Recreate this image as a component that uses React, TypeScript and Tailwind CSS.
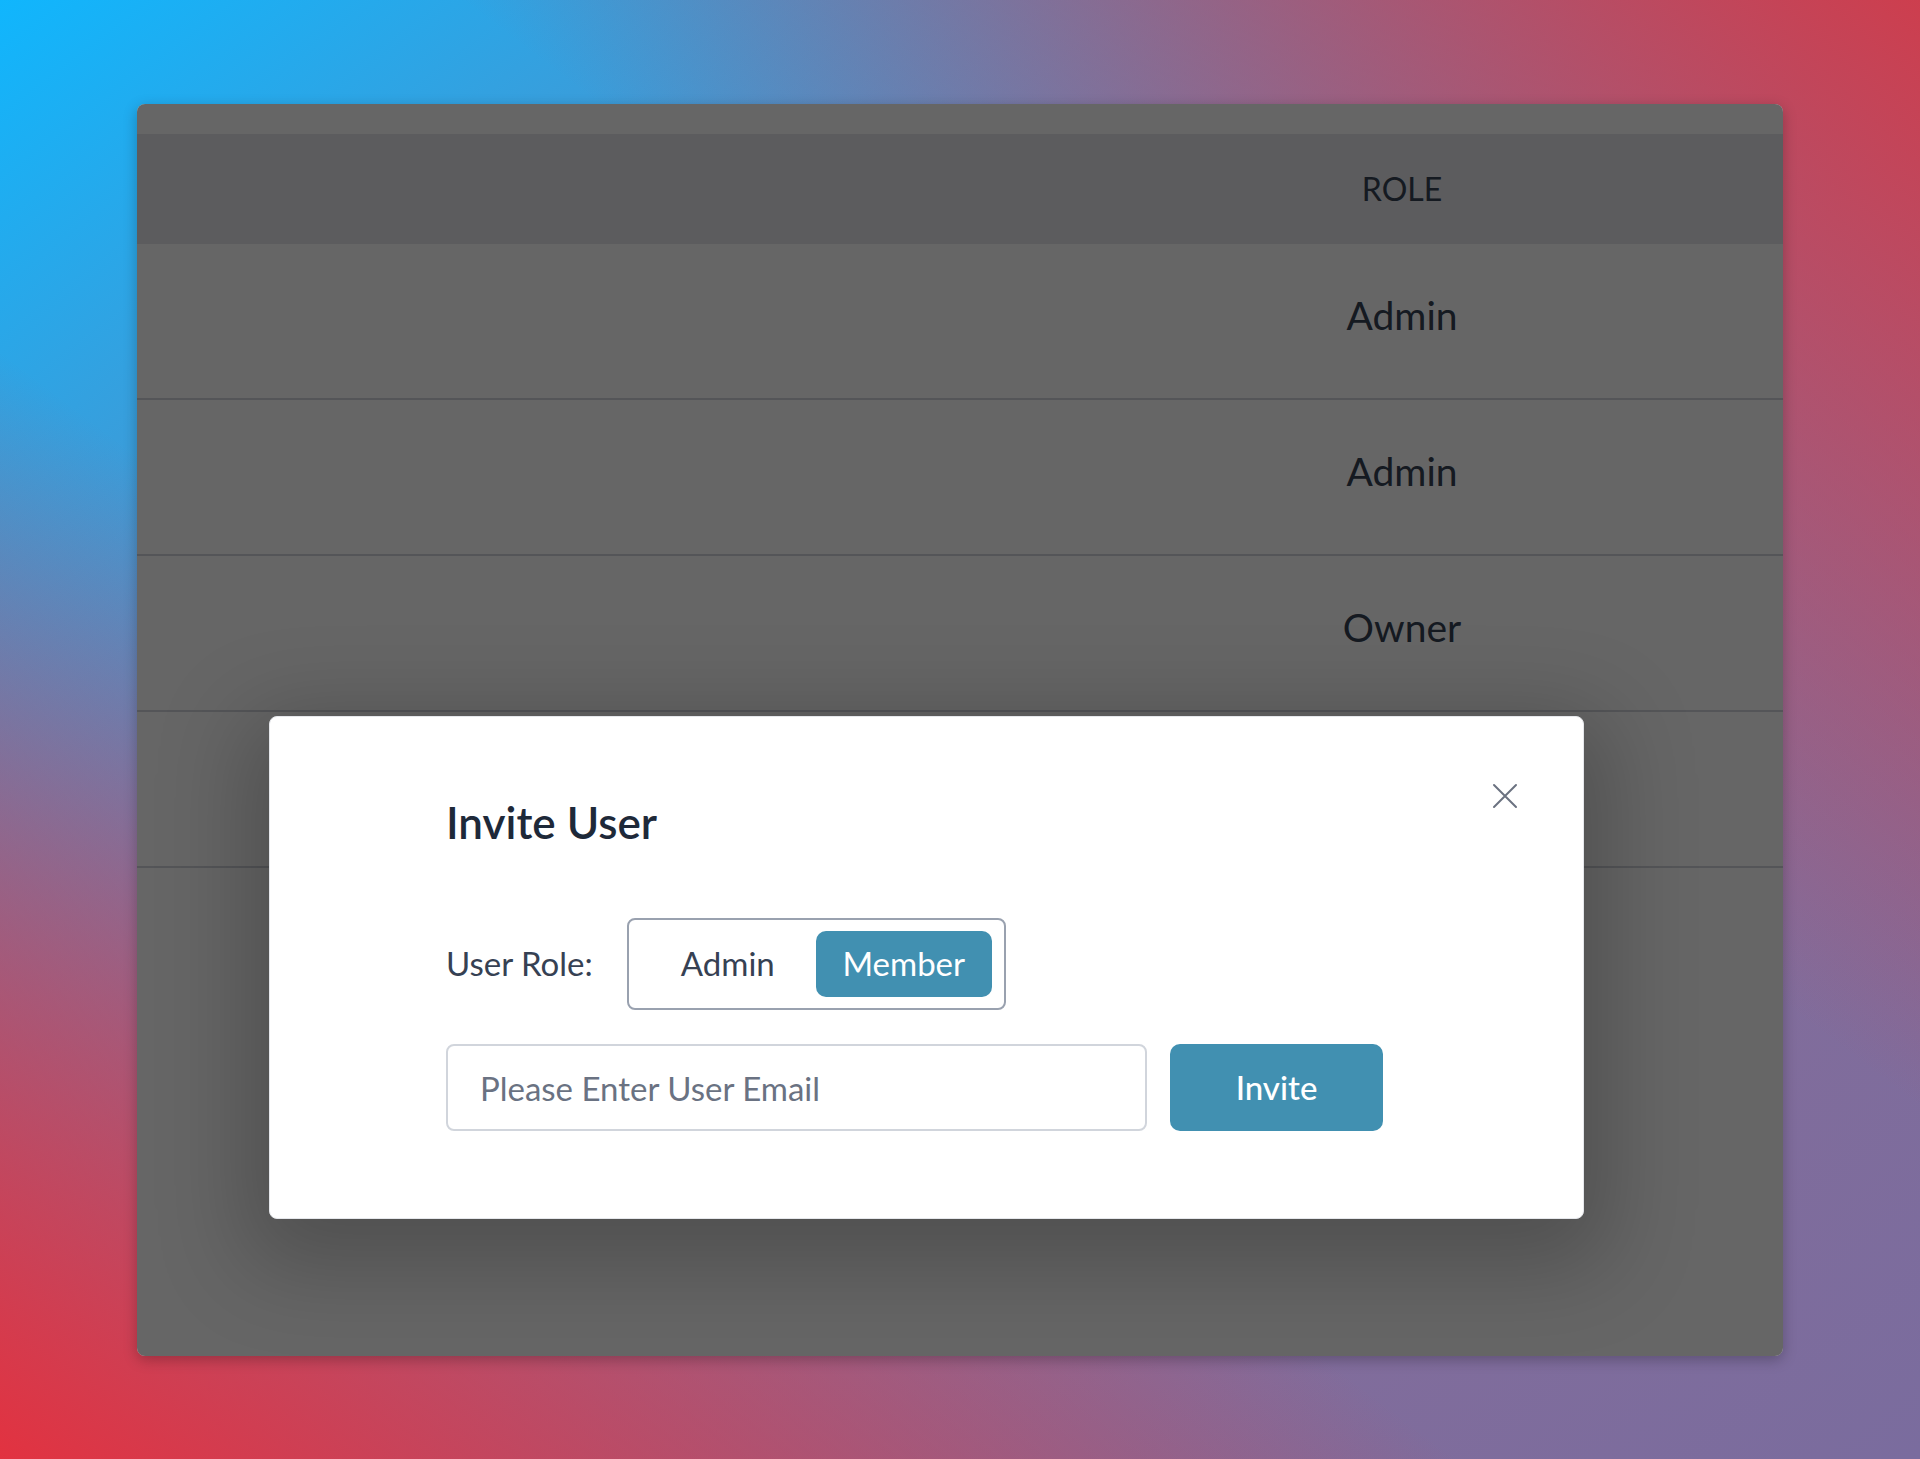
import React from "react";

const roles = ["Admin", "Admin", "Owner", "Member"];

const CloseIcon: React.FC = () => (
    <svg width="26" height="26" viewBox="0 0 26 26" fill="none" stroke="#6b7280" strokeWidth="2" strokeLinecap="round">
        <path d="M2 2 L24 24 M24 2 L2 24" />
    </svg>
);

const InviteModal: React.FC = () => (
    <div className="relative w-[1315px] h-[503px] bg-white rounded-lg border border-gray-200 shadow-[0_24px_90px_24px_rgba(0,0,0,0.22)] pl-[176px] pt-[83px]">
        <button className="absolute top-[66px] right-[65px]">
            <CloseIcon />
        </button>

        <h2 className="text-[44px] leading-none font-semibold text-gray-800">Invite User</h2>

        {/* role toggle */}
        <div className="flex items-center gap-[34px] mt-[74px]">
            <span className="text-[33px] text-gray-700">User Role:</span>
            <div className="flex border-2 border-gray-400 rounded-lg pl-[11px] pr-[12px] py-[11px]">
                <button className="w-[176px] h-[66px] rounded-[10px] text-[33px] text-gray-700">Admin</button>
                <button className="w-[176px] h-[66px] rounded-[10px] text-[33px] text-white bg-[#4190b1]">Member</button>
            </div>
        </div>

        {/* email + submit */}
        <div className="flex items-center gap-[23px] mt-[34px]">
            <input
                type="text"
                placeholder="Please Enter User Email"
                className="w-[701px] h-[87px] border-2 border-gray-300 rounded-lg px-[32px] text-[33px] text-gray-700 placeholder:text-gray-500 outline-none font-[Lato,sans-serif]"
            />
            <button className="w-[213px] h-[87px] rounded-[10px] bg-[#4190b1] text-white text-[33px] font-medium">
                Invite
            </button>
        </div>
    </div>
);

export default function App() {
    return (
        <div className="w-full h-[1459px] pt-[104px] px-[137px] font-[Lato,sans-serif] bg-[linear-gradient(to_top_right,rgba(226,50,64,1)_0%,rgba(226,50,64,0)_38%,rgba(205,62,78,0)_62%,rgba(205,62,78,1)_100%),linear-gradient(to_bottom_right,#10b6fd_0%,#8a6d98_55%,#7a6c9e_100%)]">
            <div className="relative h-[1252px] bg-white rounded-lg overflow-hidden shadow-[0_4px_14px_rgba(0,0,0,0.25)]">
                {/* table */}
                <div className="h-[30px]" />
                <div className="flex items-center h-[110px] bg-gray-200">
                    <div className="flex-1" />
                    <div className="w-[260px] text-center text-[32px] text-gray-700">ROLE</div>
                    <div className="w-[251px]" />
                </div>
                {roles.map((role, i) => (
                    <div key={i} className="flex items-center h-[156px] pb-[12px] border-b-2 border-gray-300">
                        <div className="flex-1" />
                        <div className="w-[260px] text-center text-[39px] text-gray-700">{role}</div>
                        <div className="w-[251px]" />
                    </div>
                ))}

                {/* overlay */}
                <div className="absolute inset-0 bg-black/60 pl-[132px] pt-[612px]">
                    <InviteModal />
                </div>
            </div>
        </div>
    );
}
